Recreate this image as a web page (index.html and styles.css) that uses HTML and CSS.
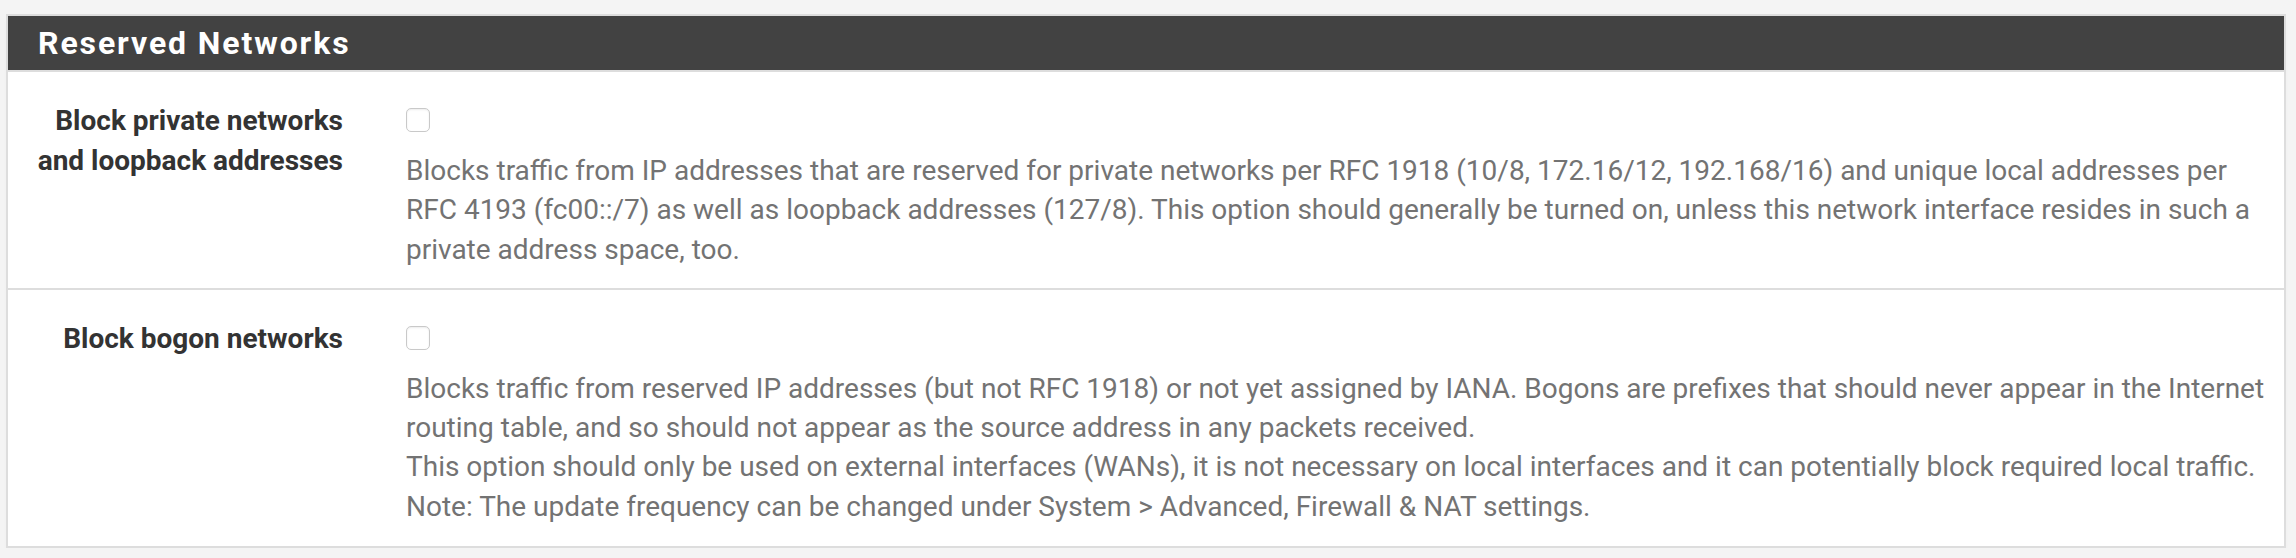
FILE: index.html
```html
<!DOCTYPE html>
<html>
<head>
<meta charset="utf-8">
<link rel="stylesheet" href="styles.css">
</head>
<body>
<div class="panel">
  <div class="panel-heading">Reserved Networks</div>
  <div class="panel-body">
    <div class="form-row">
      <div class="label">Block private networks<br>and loopback addresses</div>
      <div class="content">
        <span class="checkbox"></span>
        <div class="help">Blocks traffic from IP addresses that are reserved for private networks per RFC 1918 (10/8, 172.16/12, 192.168/16) and unique local addresses per RFC 4193 (fc00::/7) as well as loopback addresses (127/8). This option should generally be turned on, unless this network interface resides in such a private address space, too.</div>
      </div>
    </div>
    <div class="form-row">
      <div class="label">Block bogon networks</div>
      <div class="content">
        <span class="checkbox"></span>
        <div class="help">Blocks traffic from reserved IP addresses (but not RFC 1918) or not yet assigned by IANA. Bogons are prefixes that should never appear in the Internet routing table, and so should not appear as the source address in any packets received.<br>This option should only be used on external interfaces (WANs), it is not necessary on local interfaces and it can potentially block required local traffic.<br>Note: The update frequency can be changed under System &gt; Advanced, Firewall &amp; NAT settings.</div>
      </div>
    </div>
  </div>
</div>
</body>
</html>
```

FILE: styles.css
```css
html, body {
  margin: 0;
  padding: 0;
  background: #f4f4f4;
}
body {
  padding: 14px 10px 0 6px;
  font-family: Roboto, "Liberation Sans", sans-serif;
}
.panel {
  background: #fff;
  border: 2px solid #dddddd;
  box-shadow: 0 6px 6px -2px rgba(0,0,0,0.05);
}
.panel-heading {
  background: #424242;
  color: #fff;
  height: 54px;
  line-height: 54px;
  font-size: 32px;
  font-weight: bold;
  letter-spacing: 1.9px;
  padding-left: 30px;
  border-bottom: 2px solid #dddddd;
}
.form-row {
  display: grid;
  grid-template-columns: 335px 1fr;
  column-gap: 63px;
  padding: 29px 14px 19px 0;
}
.form-row + .form-row {
  border-top: 2px solid #dddddd;
  padding-bottom: 20px;
}
.label {
  text-align: right;
  font-size: 28px;
  line-height: 40px;
  font-weight: bold;
  color: #333;
}
.content {
  display: flex;
  flex-direction: column;
  align-items: flex-start;
}
.checkbox {
  display: block;
  width: 22px;
  height: 22px;
  margin-top: 7px;
  border: 1px solid #c9c9c9;
  border-radius: 5px;
  background: #fff;
  box-shadow: inset 0 1px 2px rgba(0,0,0,0.08);
}
.help {
  margin-top: 19px;
  font-size: 28px;
  line-height: 39.3px;
  color: #737373;
}
```
